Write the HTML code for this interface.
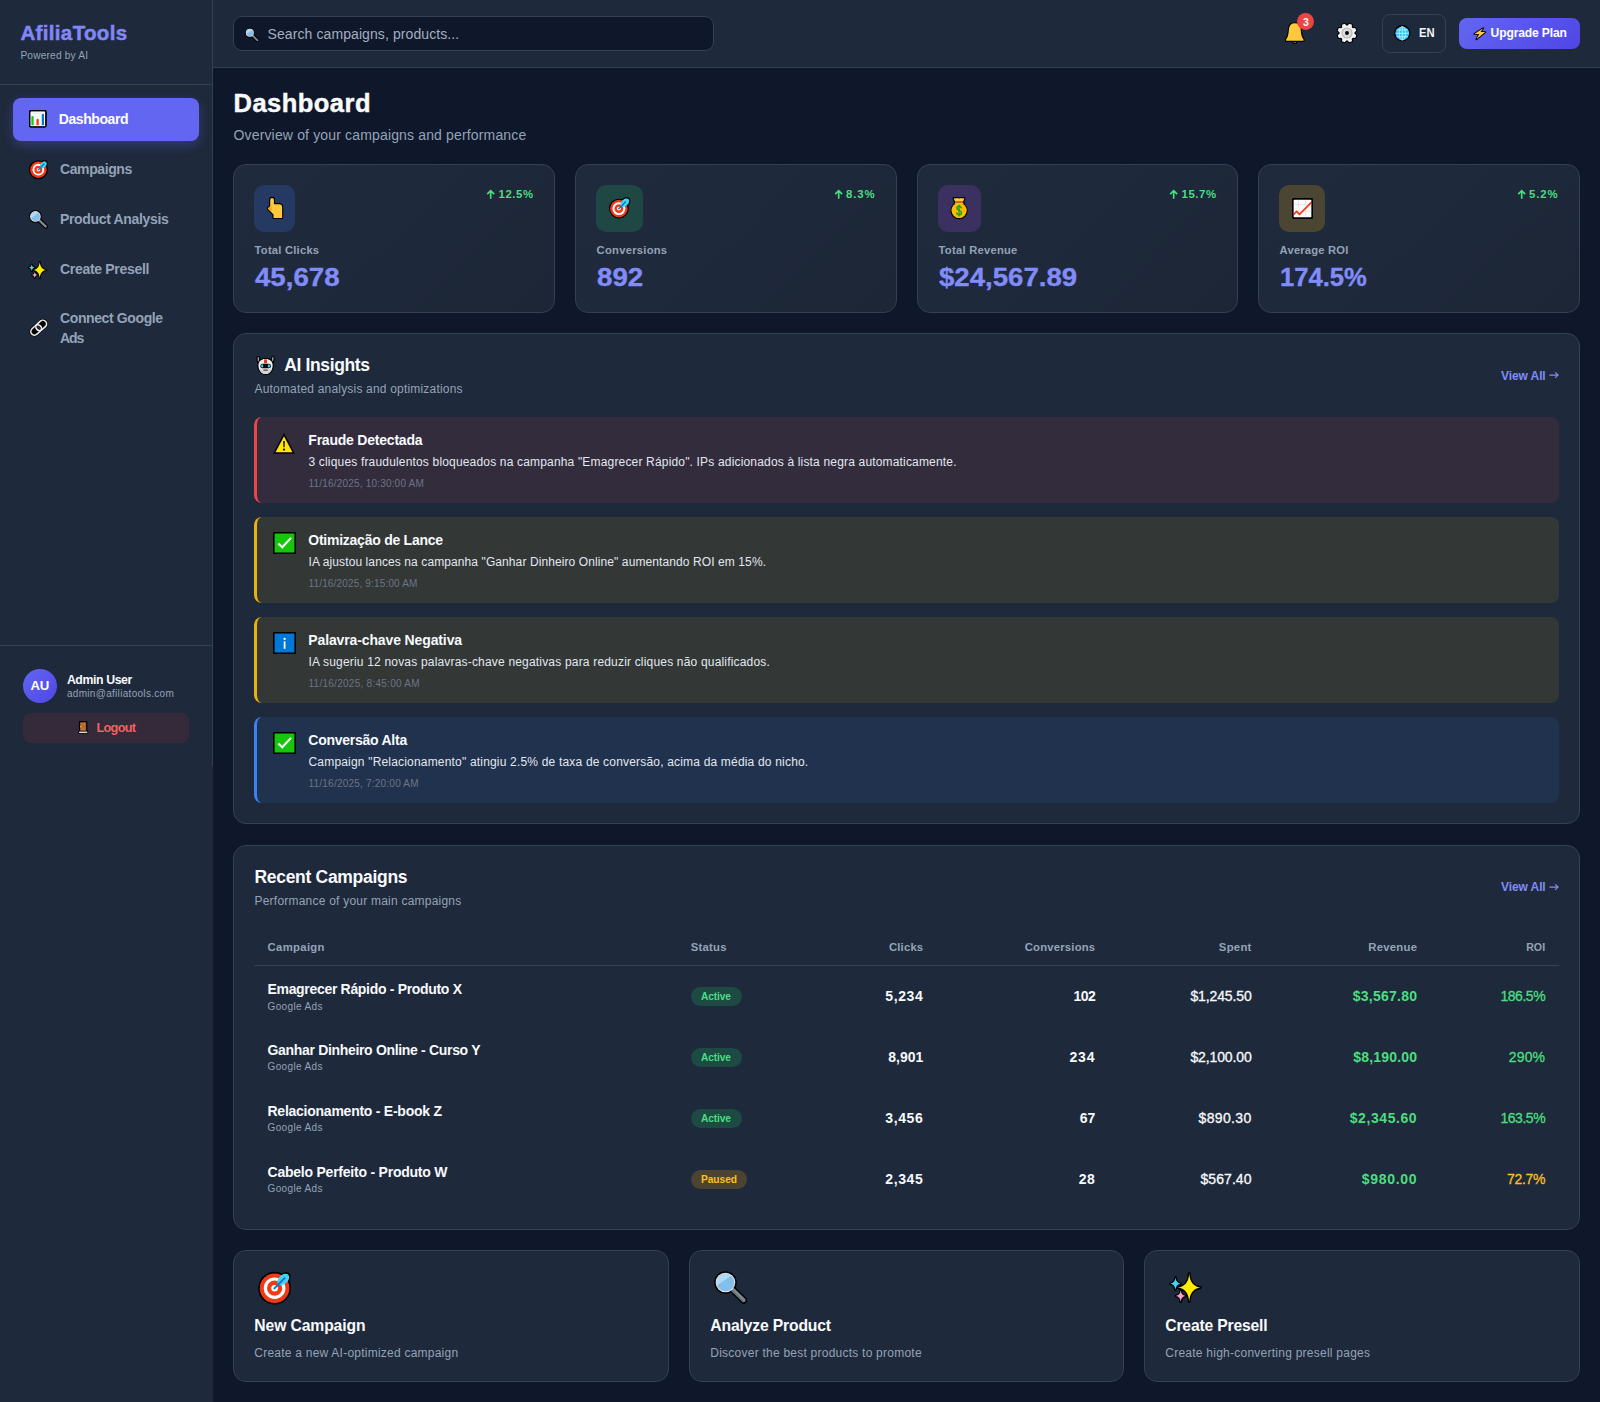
<!DOCTYPE html>
<html lang="en">
<head>
<meta charset="utf-8">
<title>AfiliaTools Dashboard</title>
<style>
*{box-sizing:border-box;margin:0;padding:0}
html,body{width:1600px;height:1402px;overflow:hidden}
body{font-family:"Liberation Sans",sans-serif;background:#0f172a;color:#f8fafc;position:relative}
.t{position:absolute;white-space:nowrap}
.hl{position:absolute;height:1px;background:#334155}
#sidebar{position:absolute;left:0;top:0;width:213px;height:1402px;background:#1e293b}
#sideline{position:absolute;left:212px;top:0;width:1px;height:766px;background:#334155}
.logo{font-size:20.5px;font-weight:700;color:#8186f8;line-height:24px;-webkit-text-stroke:0.5px #8186f8}
.powered{font-size:10.2px;color:#94a3b8;line-height:14px}
.nav{position:absolute;left:13px;width:186px;border-radius:8px}
.nav.active{background:#6366f1;box-shadow:0 4px 12px rgba(99,102,241,.32)}
.navt{font-size:14px;font-weight:700;color:#94a3b8;line-height:20px}
#avatar{position:absolute;left:23px;top:669px;width:34px;height:34px;border-radius:50%;background:linear-gradient(135deg,#6366f1,#4f46e5)}
#logout{position:absolute;left:23.3px;top:712.8px;width:165.8px;height:30px;border-radius:7.5px;background:#342a3a}
#header{position:absolute;left:213px;top:0;width:1387px;height:68px;background:#1e293b;border-bottom:1px solid #334155}
#search{position:absolute;left:233px;top:16px;width:481px;height:35px;border-radius:9px;background:#0f172a;border:1px solid #334155}
#lang{position:absolute;left:1381.5px;top:14px;width:64.5px;height:39px;border-radius:8px;border:1px solid #334155;background:#1e293b}
#upgrade{position:absolute;left:1459px;top:18.3px;width:121px;height:30.4px;border-radius:8px;background:linear-gradient(135deg,#6366f1,#4f46e5)}
#badge{position:absolute;left:1297px;top:13px;width:17px;height:17px;border-radius:50%;background:#ef4444}
.h1{font-size:25.5px;font-weight:700;line-height:34px;color:#f8fafc;-webkit-text-stroke:0.45px #f8fafc}
.sub{font-size:14px;line-height:18px;color:#94a3b8}
.card{position:absolute;background:#1e293b;border:1px solid #334155;border-radius:13px}
.ib{position:absolute;border-radius:10px}
.slb{font-size:11.2px;font-weight:700;color:#94a3b8;line-height:16px}
.svl{font-size:24.9px;font-weight:700;color:#818cf8;line-height:32px;-webkit-text-stroke:0.35px #818cf8}
.sch{font-size:11.4px;font-weight:700;color:#4ade80;line-height:16px}
.ctitle{font-size:17.5px;font-weight:700;color:#f8fafc;line-height:24px}
.csub{font-size:12px;color:#94a3b8;line-height:16px}
.viewall{font-size:12px;font-weight:700;color:#818cf8;line-height:16px}
.ins{position:absolute;left:254px;width:1305px;height:86.7px;border-radius:8px;border-left:3px solid}
.it{font-size:14px;font-weight:700;color:#f8fafc;line-height:20px}
.id{font-size:12px;color:#e2e8f0;line-height:18px}
.im{font-size:10px;color:#6a7585;line-height:14px}
.th{font-size:11.3px;font-weight:700;color:#94a3b8;line-height:16px}
.cn{font-size:14px;font-weight:700;color:#f8fafc;line-height:18px}
.cs{font-size:10px;color:#94a3b8;line-height:14px}
.pill{position:absolute;height:19px;border-radius:10px}
.pt{font-size:10.2px;font-weight:700;line-height:14px}
.num{font-size:14px;color:#f8fafc;line-height:20px}
.num.b{font-weight:700}
.num.m{-webkit-text-stroke:0.3px currentColor}
.qt{font-size:15.7px;font-weight:700;color:#f8fafc;line-height:20px}
.qd{font-size:12px;color:#94a3b8;line-height:16px}
.sg{background:linear-gradient(135deg,#1f2a3c 0%,#1e293b 40%,#1c2637 100%)}

</style>
</head>
<body>
<div id="sidebar"></div><div id="sideline"></div>
<div class="t logo" style="left:20.4px;top:20.5px;letter-spacing:0.353px;">AfiliaTools</div>
<div class="t powered" style="left:20.4px;top:48.5px;letter-spacing:0.166px;">Powered by AI</div>
<div class="hl" style="left:0;top:84px;width:212px"></div>
<div class="nav active" style="top:97.6px;height:43.4px"></div>
<svg viewBox="0 0 18 18" width="17.6" height="17.60" style="position:absolute;overflow:visible;left:28.7px;top:110.4px"><rect x="0.65" y="0.65" width="16.7" height="16.7" rx="1.4" fill="#fcfcfc" stroke="#000" stroke-width="1.3"/>
<path d="M6.2,1.5V16M11.4,1.5V16M1.5,3.2H16.5" stroke="#e4e4e4" stroke-width="0.5"/>
<path d="M3.6,16.4V7.2" stroke="#16c60c" stroke-width="2.3" stroke-linecap="round"/>
<path d="M8.8,16.4V10.2" stroke="#f03a17" stroke-width="2.3" stroke-linecap="round"/>
<path d="M14.2,16.4V5" stroke="#0078d4" stroke-width="2.3" stroke-linecap="round"/>
<rect x="1.3" y="15.6" width="15.4" height="1.2" fill="#fcfcfc"/>
<rect x="0.65" y="0.65" width="16.7" height="16.7" rx="1.4" fill="none" stroke="#000" stroke-width="1.3"/></svg>
<div class="t navt" style="left:58.75px;top:109.4px;color:#fff;letter-spacing:-0.422px;">Dashboard</div>
<svg viewBox="0 0 34 34" width="19.2" height="19.20" style="position:absolute;overflow:visible;left:28.6px;top:159.6px"><circle cx="16.6" cy="17.2" r="16.9" fill="#000"/>
<ellipse cx="25.4" cy="8.4" rx="9.3" ry="6.5" transform="rotate(-43 25.4 8.4)" fill="#000"/>
<circle cx="16.6" cy="17.2" r="14.6" fill="#f03a17"/>
<circle cx="16.6" cy="17.2" r="10.4" fill="#fff"/>
<circle cx="16.6" cy="17.2" r="7.0" fill="#f03a17"/>
<circle cx="16.6" cy="17.2" r="3.0" fill="#fff"/>
<ellipse cx="25.3" cy="8.5" rx="6.9" ry="4.6" transform="rotate(-43 25.3 8.5)" fill="#3dd6f5"/>
<line x1="16.4" y1="17.4" x2="26.6" y2="7.2" stroke="#0078d4" stroke-width="2.4" stroke-linecap="round"/></svg>
<div class="t navt" style="left:60px;top:159.4px;letter-spacing:-0.402px;">Campaigns</div>
<svg viewBox="0 0 34 34" width="18.8" height="18.80" style="position:absolute;overflow:visible;left:28.8px;top:209.9px"><line x1="19" y1="19" x2="30" y2="29.6" stroke="#000" stroke-width="8.4" stroke-linecap="round"/>
<circle cx="11.6" cy="11.6" r="11.6" fill="#000"/>
<line x1="19" y1="19" x2="30" y2="29.6" stroke="#7d8b92" stroke-width="4.4" stroke-linecap="round"/>
<line x1="18.2" y1="19.8" x2="29.2" y2="30.4" stroke="#5f6d74" stroke-width="1.3" stroke-linecap="round"/>
<circle cx="11.6" cy="11.6" r="9.6" fill="#e8e8e8"/>
<circle cx="11.6" cy="11.6" r="8.3" fill="#83beec"/>
<path d="M3.80,14.34 A8.3,8.3 0 0 1 17.08,5.37 Z" fill="#b3d9f5"/></svg>
<div class="t navt" style="left:60px;top:209.4px;letter-spacing:-0.341px;">Product Analysis</div>
<svg viewBox="0 0 34 32" width="19.4" height="18.26" style="position:absolute;overflow:visible;left:28.4px;top:261.1px"><g stroke="#000" stroke-width="3.3" stroke-linejoin="round" fill="#000">
<path d="M20.60,1.50 C21.28,10.14 25.16,15.04 32.00,15.90 C25.16,16.76 21.28,21.66 20.60,30.30 C19.92,21.66 16.04,16.76 9.20,15.90 C16.04,15.04 19.92,10.14 20.60,1.50 Z"/>
<path d="M6.60,5.90 C7.02,9.50 8.68,11.42 11.80,11.90 C8.68,12.38 7.02,14.30 6.60,17.90 C6.18,14.30 4.52,12.38 1.40,11.90 C4.52,11.42 6.18,9.50 6.60,5.90 Z"/>
<path d="M11.90,18.80 C12.30,22.16 13.90,23.95 16.90,24.40 C13.90,24.85 12.30,26.64 11.90,30.00 C11.50,26.64 9.90,24.85 6.90,24.40 C9.90,23.95 11.50,22.16 11.90,18.80 Z"/>
</g>
<path d="M6.60,5.90 C7.02,9.50 8.68,11.42 11.80,11.90 C8.68,12.38 7.02,14.30 6.60,17.90 C6.18,14.30 4.52,12.38 1.40,11.90 C4.52,11.42 6.18,9.50 6.60,5.90 Z" fill="#3dd6f5"/>
<path d="M11.90,18.80 C12.30,22.16 13.90,23.95 16.90,24.40 C13.90,24.85 12.30,26.64 11.90,30.00 C11.50,26.64 9.90,24.85 6.90,24.40 C9.90,23.95 11.50,22.16 11.90,18.80 Z" fill="#f4a0c4"/>
<path d="M20.60,1.50 C21.28,10.14 25.16,15.04 32.00,15.90 C25.16,16.76 21.28,21.66 20.60,30.30 C19.92,21.66 16.04,16.76 9.20,15.90 C16.04,15.04 19.92,10.14 20.60,1.50 Z" fill="#ffed00"/></svg>
<div class="t navt" style="left:60px;top:259.4px;letter-spacing:-0.308px;">Create Presell</div>
<svg viewBox="0 0 20 20" width="19.4" height="19.40" style="position:absolute;overflow:visible;left:28.5px;top:317.8px"><g transform="rotate(-42 10 10)">
<rect x="0.4" y="6.2" width="12.2" height="7.6" rx="3.8" fill="#000" stroke="#000" stroke-width="2.9"/>
<rect x="7.4" y="6.2" width="12.2" height="7.6" rx="3.8" fill="#000" stroke="#000" stroke-width="2.9"/>
<path d="M10,7.2 A3,3 0 0 1 10,12.8 A3,3 0 0 1 10,7.2Z" fill="#1e293b"/>
<rect x="0.4" y="6.2" width="12.2" height="7.6" rx="3.8" fill="none" stroke="#ececec" stroke-width="1.65"/>
<rect x="7.4" y="6.2" width="12.2" height="7.6" rx="3.8" fill="none" stroke="#ececec" stroke-width="1.65"/>
</g></svg>
<div class="t navt" style="left:60px;top:307.6px;letter-spacing:-0.387px;">Connect Google</div>
<div class="t navt" style="left:60px;top:327.6px;letter-spacing:-1.027px;">Ads</div>
<div class="hl" style="left:0;top:645px;width:212px"></div>
<div id="avatar"></div>
<div class="t" style="left:30.6px;top:677px;font-size:13.2px;font-weight:700;color:#fff;line-height:17px;letter-spacing:-0.262px;">AU</div>
<div class="t" style="left:66.9px;top:672px;font-size:12.3px;font-weight:700;color:#f8fafc;line-height:16px;letter-spacing:-0.402px;">Admin User</div>
<div class="t" style="left:66.9px;top:687.4px;font-size:10px;color:#94a3b8;line-height:14px;letter-spacing:0.308px;">admin@afiliatools.com</div>
<div id="logout"></div>
<svg viewBox="0 0 12 15" width="10.4" height="13.00" style="position:absolute;overflow:visible;left:77.9px;top:721px"><rect x="1.7" y="0.7" width="8.4" height="12.6" rx="0.6" fill="#a5602b" stroke="#000" stroke-width="1.4"/>
<rect x="3.4" y="2.2" width="5.2" height="3.6" fill="#b87333"/>
<rect x="3.4" y="7" width="5.2" height="4.2" fill="#b87333"/>
<circle cx="3.2" cy="6.5" r="0.85" fill="#ffd400"/>
<rect x="0.7" y="11.9" width="10.6" height="2.2" rx="0.5" fill="#e9e9e9" stroke="#000" stroke-width="1.2"/>
<rect x="1.3" y="12.4" width="9.4" height="1.1" fill="#f2f2f2"/></svg>
<div class="t" style="left:96.5px;top:720.2px;font-size:12.7px;font-weight:700;color:#f26161;line-height:17px;letter-spacing:-0.697px;">Logout</div>
<div id="header"></div>
<div id="search"></div>
<svg viewBox="0 0 34 34" width="14.2" height="14.20" style="position:absolute;overflow:visible;left:245px;top:27.6px"><line x1="19" y1="19" x2="30" y2="29.6" stroke="#000" stroke-width="8.4" stroke-linecap="round"/>
<circle cx="11.6" cy="11.6" r="11.6" fill="#000"/>
<line x1="19" y1="19" x2="30" y2="29.6" stroke="#7d8b92" stroke-width="4.4" stroke-linecap="round"/>
<line x1="18.2" y1="19.8" x2="29.2" y2="30.4" stroke="#5f6d74" stroke-width="1.3" stroke-linecap="round"/>
<circle cx="11.6" cy="11.6" r="9.6" fill="#e8e8e8"/>
<circle cx="11.6" cy="11.6" r="8.3" fill="#83beec"/>
<path d="M3.80,14.34 A8.3,8.3 0 0 1 17.08,5.37 Z" fill="#b3d9f5"/></svg>
<div class="t" style="left:267.5px;top:24.3px;font-size:14px;color:#a3aebf;line-height:20px;letter-spacing:0.094px;">Search campaigns, products...</div>
<svg viewBox="0 0 20 22.4" width="19.6" height="21.95" style="position:absolute;overflow:visible;left:1285.2px;top:22.1px"><g stroke="#000" stroke-width="2.2" stroke-linejoin="round" style="paint-order:stroke">
<circle cx="10" cy="19.6" r="1.7" fill="#b5722a"/>
<path d="M10,1.3C6.4,1.3 4.4,3.4 4.1,6.8C3.9,9.6 3.5,12.6 2.7,15C2.3,16.2 1.6,17 1.1,17.8V19.2H18.9V17.8C18.4,17 17.7,16.2 17.3,15C16.5,12.6 16.1,9.6 15.9,6.8C15.6,3.4 13.6,1.3 10,1.3Z" fill="#ffc83d"/>
</g></svg>
<div id="badge"></div>
<div class="t" style="left:1302.9px;top:14.6px;font-size:10.5px;font-weight:700;color:#fff;line-height:14px;">3</div>
<svg viewBox="0 0 22 22" width="22" height="22.00" style="position:absolute;overflow:visible;left:1336.3px;top:22.4px"><path d="M20.43,9.51L20.43,12.49L18.19,13.15L17.60,14.56L18.73,16.61L16.61,18.73L14.56,17.60L13.15,18.19L12.49,20.43L9.51,20.43L8.85,18.19L7.44,17.60L5.39,18.73L3.27,16.61L4.40,14.56L3.81,13.15L1.57,12.49L1.57,9.51L3.81,8.85L4.40,7.44L3.27,5.39L5.39,3.27L7.44,4.40L8.85,3.81L9.51,1.57L12.49,1.57L13.15,3.81L14.56,4.40L16.61,3.27L18.73,5.39L17.60,7.44L18.19,8.85Z" fill="#f2f2f2" stroke="#000" stroke-width="2.1" stroke-linejoin="round" style="paint-order:stroke" transform="rotate(22.5 11 11)"/>
<circle cx="11" cy="11" r="5.0" fill="#dcdcdc" stroke="#b4b4b4" stroke-width="1.1"/>
<circle cx="11" cy="11" r="1.95" fill="#000"/></svg>
<div id="lang"></div>
<svg viewBox="0 0 17 17" width="16.6" height="16.60" style="position:absolute;overflow:visible;left:1393.8px;top:24.8px"><circle cx="8.5" cy="8.5" r="7.7" fill="#29c5f0" stroke="#000" stroke-width="1.4"/>
<g fill="none" stroke="#d8f6ff" stroke-width="0.75">
<ellipse cx="8.5" cy="8.5" rx="3.2" ry="7"/>
<path d="M8.5,1.5V15.5M1.6,8.5H15.4M2.6,5H14.4M2.6,12H14.4"/>
</g></svg>
<div class="t" style="left:1418.9px;top:25.2px;font-size:12.1px;font-weight:700;color:#f1f5f9;line-height:17px;transform:scaleX(0.9279);transform-origin:left center;">EN</div>
<div id="upgrade"></div>
<svg viewBox="0 0 14 14" width="13.4" height="13.40" style="position:absolute;overflow:visible;left:1473px;top:27px"><path d="M10.6,1.2L1.4,7.2H6.5L3.6,12.9L12.8,5.3H7.9Z" fill="#ffc83d" stroke="#000" stroke-width="1.9" stroke-linejoin="round" style="paint-order:stroke"/></svg>
<div class="t" style="left:1490.6px;top:25.2px;font-size:12.1px;font-weight:700;color:#fff;line-height:17px;letter-spacing:-0.143px;">Upgrade Plan</div>
<div class="t h1" style="left:233.5px;top:85.6px;letter-spacing:0.475px;">Dashboard</div>
<div class="t sub" style="left:233.5px;top:125.6px;letter-spacing:0.156px;">Overview of your campaigns and performance</div>
<div class="card sg" style="left:233px;top:164px;width:322px;height:149px"></div>
<div class="ib" style="left:254px;top:185px;width:41px;height:47px;background:#253a62"></div>
<svg viewBox="0 0 17 23" width="16.6" height="22.46" style="position:absolute;overflow:visible;left:266.9px;top:196.9px"><path d="M3.3,9.4V2.9A1.9,1.9 0 0 1 7.1,2.9V7.3H12.4A3.1,3.1 0 0 1 15.5,10.4V21.4H6.7V17.9L1.3,12.6A1.25,1.25 0 0 1 1.3,10.9Z" fill="#ffc83d" stroke="#000" stroke-width="2.3" stroke-linejoin="round" style="paint-order:stroke"/>
<path d="M3.3,9.9L1.6,11.3A0.8,0.8 0 0 0 1.7,12.2L4.6,15V10Z" fill="#f0a30a"/>
<path d="M9.6,8.2V9.4M12.2,8.4V9.6" stroke="#e3a100" stroke-width="0.7"/></svg>
<div class="t slb" style="left:254.6px;top:242.4px;letter-spacing:0.230px;">Total Clicks</div>
<div class="t svl" style="left:254.8px;top:261px;transform:scaleX(1.1098);transform-origin:left center;">45,678</div>
<div class="t sch" style="right:1066.4px;top:186.3px;letter-spacing:0.547px;">12.5%</div>
<svg viewBox="0 0 10 11" width="9.4" height="10.34" style="position:absolute;left:485.8px;top:188.6px"><path d="M5,10.4V1.7M1.3,5.4L5,1.7L8.7,5.4" fill="none" stroke="#4ade80" stroke-width="1.75"/></svg>
<div class="card sg" style="left:575px;top:164px;width:322px;height:149px"></div>
<div class="ib" style="left:596px;top:185px;width:47px;height:47px;background:#1f4743"></div>
<svg viewBox="0 0 22 22" width="22" height="22.00" style="position:absolute;overflow:visible;left:609.4px;top:196.5px"><circle cx="9.9" cy="11.6" r="9.9" fill="#000"/>
<ellipse cx="15.9" cy="5.6" rx="6.3" ry="4.5" transform="rotate(-43 15.9 5.6)" fill="#000"/>
<circle cx="9.9" cy="11.6" r="8.8" fill="#f03a17"/>
<circle cx="9.9" cy="11.6" r="6.4" fill="#fff"/>
<circle cx="9.9" cy="11.6" r="4.4" fill="#f03a17"/>
<circle cx="9.9" cy="11.6" r="1.9" fill="#fff"/>
<ellipse cx="15.8" cy="5.7" rx="5.2" ry="3.3" transform="rotate(-43 15.8 5.7)" fill="#3dd6f5"/>
<line x1="9.8" y1="11.7" x2="16.4" y2="5.1" stroke="#0078d4" stroke-width="1.4" stroke-linecap="round"/></svg>
<div class="t slb" style="left:596.6px;top:242.4px;letter-spacing:0.273px;">Conversions</div>
<div class="t svl" style="left:596.8px;top:261px;transform:scaleX(1.1136);transform-origin:left center;">892</div>
<div class="t sch" style="right:724.4px;top:186.3px;letter-spacing:0.927px;">8.3%</div>
<svg viewBox="0 0 10 11" width="9.4" height="10.34" style="position:absolute;left:833.6px;top:188.6px"><path d="M5,10.4V1.7M1.3,5.4L5,1.7L8.7,5.4" fill="none" stroke="#4ade80" stroke-width="1.75"/></svg>
<div class="card sg" style="left:917px;top:164px;width:321px;height:149px"></div>
<div class="ib" style="left:938px;top:185px;width:43px;height:47px;background:#3b3160"></div>
<svg viewBox="0 0 18 22" width="18.4" height="22.49" style="position:absolute;overflow:visible;left:950.3px;top:197.1px"><g stroke="#000" stroke-width="2.4" stroke-linejoin="round" style="paint-order:stroke">
<path d="M3.8,1.2L5.3,1.8L6.9,1.1L8.9,1.8L10.9,1.1L12.5,1.8L14,1.2L12.8,4.6H5Z" fill="#ffc83d"/>
<circle cx="8.9" cy="13.3" r="7.3" fill="#ffb900"/>
<path d="M5,4.4H12.8L13.2,6.4H4.6Z" fill="#b5722a"/>
</g>
<path d="M3.8,1.2L5.3,1.8L6.9,1.1L8.9,1.8L10.9,1.1L12.5,1.8L14,1.2L12.8,4.4H5Z" fill="#ffc83d"/>
<rect x="5" y="4.3" width="7.8" height="1.5" fill="#b5722a"/>
<circle cx="8.9" cy="13.3" r="7.3" fill="#ffb900"/>
<path d="M5.2,5.8H12.6L13.6,7.6H4.2Z" fill="#ffb900"/>
<path d="M11,10.5C10.6,9.4 9.6,9.1 8.8,9.1C7.6,9.1 6.8,9.9 6.8,10.9C6.8,13.4 11.2,12.7 11.2,15.3C11.2,16.5 10.2,17.3 9,17.3C7.9,17.3 6.9,16.8 6.6,15.7" fill="none" stroke="#16a521" stroke-width="1.5" stroke-linecap="round"/>
<path d="M8.9,8V18.5" stroke="#16a521" stroke-width="1.3" stroke-linecap="round"/></svg>
<div class="t slb" style="left:938.6px;top:242.4px;letter-spacing:0.259px;">Total Revenue</div>
<div class="t svl" style="left:938.8px;top:261px;transform:scaleX(1.1085);transform-origin:left center;">$24,567.89</div>
<div class="t sch" style="right:383.4000000000001px;top:186.3px;letter-spacing:0.547px;">15.7%</div>
<svg viewBox="0 0 10 11" width="9.4" height="10.34" style="position:absolute;left:1168.8px;top:188.6px"><path d="M5,10.4V1.7M1.3,5.4L5,1.7L8.7,5.4" fill="none" stroke="#4ade80" stroke-width="1.75"/></svg>
<div class="card sg" style="left:1258px;top:164px;width:322px;height:149px"></div>
<div class="ib" style="left:1279px;top:185px;width:46px;height:47px;background:#4a4631"></div>
<svg viewBox="0 0 21 21" width="21" height="21.00" style="position:absolute;overflow:visible;left:1291.5px;top:198.0px"><rect x="0.7" y="0.7" width="19.6" height="19.6" rx="1.5" fill="#fbfbfb" stroke="#000" stroke-width="1.4"/>
<path d="M6.3,1.5V19.5M13.6,1.5V19.5M1.5,6.4H19.5M1.5,13.4H19.5" stroke="#dcdcdc" stroke-width="0.7"/>
<path d="M1.2,17L4.6,13.4L7.5,16.3L19.9,3.9" fill="none" stroke="#f03a17" stroke-width="1.7" stroke-linejoin="miter"/>
<rect x="0.7" y="0.7" width="19.6" height="19.6" rx="1.5" fill="none" stroke="#000" stroke-width="1.4"/></svg>
<div class="t slb" style="left:1279.6px;top:242.4px;letter-spacing:0.200px;">Average ROI</div>
<div class="t svl" style="left:1279.8px;top:261px;transform:scaleX(1.0294);transform-origin:left center;">174.5%</div>
<div class="t sch" style="right:41.40000000000009px;top:186.3px;letter-spacing:0.927px;">5.2%</div>
<svg viewBox="0 0 10 11" width="9.4" height="10.34" style="position:absolute;left:1516.5px;top:188.6px"><path d="M5,10.4V1.7M1.3,5.4L5,1.7L8.7,5.4" fill="none" stroke="#4ade80" stroke-width="1.75"/></svg>
<div class="card" style="left:233px;top:333px;width:1347px;height:491.4px"></div>
<svg viewBox="0 0 19 19" width="19.3" height="19.30" style="position:absolute;overflow:visible;left:256px;top:355.5px"><g stroke="#000" stroke-width="2.3" stroke-linejoin="round" style="paint-order:stroke">
<path d="M1.4,1.3H2.8L3.4,6.8H2.2Z" fill="#a6a6a6"/>
<path d="M17.4,1.3H16L15.4,6.8H16.6Z" fill="#a6a6a6"/>
<path d="M9.4,2.9C13.6,2.9 16.4,5.2 16.4,9.3C16.4,14 13.2,17.8 9.4,17.8C5.6,17.8 2.4,14 2.4,9.3C2.4,5.2 5.2,2.9 9.4,2.9Z" fill="#efefef"/>
</g>
<path d="M2.9,12.2C4.2,15.8 6.8,17.6 9.4,17.6C12,17.6 14.6,15.8 15.9,12.2C13,13 5.8,13 2.9,12.2Z" fill="#d6d6d6"/>
<rect x="7.0" y="3.2" width="4.8" height="3.8" fill="#fff"/>
<rect x="7.9" y="3.1" width="3" height="4" rx="0.5" fill="#f03a17"/>
<rect x="4.3" y="7.6" width="10.3" height="4.4" rx="1.9" fill="#000"/>
<ellipse cx="6.1" cy="9.8" rx="1.1" ry="1.6" fill="#3dd6f5"/>
<ellipse cx="12.7" cy="9.8" rx="1.1" ry="1.6" fill="#3dd6f5"/>
<rect x="7.2" y="13.3" width="4.4" height="1.3" rx="0.5" fill="#4a4a4a"/></svg>
<div class="t ctitle" style="left:284.3px;top:353px;letter-spacing:-0.370px;">AI Insights</div>
<div class="t csub" style="left:254.5px;top:381px;letter-spacing:0.187px;">Automated analysis and optimizations</div>
<div class="t viewall" style="right:54.40000000000009px;top:367.6px;letter-spacing:-0.108px;">View All</div>
<svg viewBox="0 0 10 8" width="9.8" height="7.84" style="position:absolute;left:1548.9px;top:371.3px"><path d="M0.4,4.2H9.2M6.3,1.4L9.2,4.2L6.3,7" fill="none" stroke="#818cf8" stroke-width="1.3"/></svg>
<div class="ins" style="top:416.8px;background:#332c3c;border-left-color:#ef4444"></div>
<svg viewBox="0 0 22 22" width="22" height="22.00" style="position:absolute;overflow:visible;left:273.4px;top:433.2px"><path d="M11,1.7L20.7,20H1.3Z" fill="#ffe500" stroke="#000" stroke-width="1.5" stroke-linejoin="miter"/>
<path d="M10.2,8h1.6l-0.25,6.2h-1.1Z" fill="#000"/>
<circle cx="11" cy="16.6" r="1.05" fill="#000"/></svg>
<div class="t it" style="left:308.3px;top:430.2px;letter-spacing:-0.216px;">Fraude Detectada</div>
<div class="t id" style="left:308.5px;top:453.1px;letter-spacing:0.172px;">3 cliques fraudulentos bloqueados na campanha "Emagrecer Rápido". IPs adicionados à lista negra automaticamente.</div>
<div class="t im" style="left:308.5px;top:476.8px;letter-spacing:0.192px;">11/16/2025, 10:30:00 AM</div>
<div class="ins" style="top:516.8px;background:#333736;border-left-color:#eab308"></div>
<svg viewBox="0 0 23 22" width="23" height="22.00" style="position:absolute;overflow:visible;left:273px;top:532.1px"><rect x="0.8" y="0.8" width="21.4" height="20.4" rx="0.4" fill="#16c60c" stroke="#000" stroke-width="1.6"/>
<path d="M5.4,11.4L9.3,15.2L18,5.9" fill="none" stroke="#fff" stroke-width="2.1" stroke-linecap="butt" stroke-linejoin="miter"/></svg>
<div class="t it" style="left:308.3px;top:530.1999999999999px;letter-spacing:-0.249px;">Otimização de Lance</div>
<div class="t id" style="left:308.5px;top:553.0999999999999px;letter-spacing:0.097px;">IA ajustou lances na campanha "Ganhar Dinheiro Online" aumentando ROI em 15%.</div>
<div class="t im" style="left:308.5px;top:576.8px;letter-spacing:0.163px;">11/16/2025, 9:15:00 AM</div>
<div class="ins" style="top:616.8px;background:#333736;border-left-color:#eab308"></div>
<svg viewBox="0 0 23 22" width="23" height="22.00" style="position:absolute;overflow:visible;left:273px;top:632.1px"><rect x="0.8" y="0.8" width="21.4" height="20.4" rx="0.4" fill="#0078d7" stroke="#000" stroke-width="1.6"/>
<circle cx="11.6" cy="6.9" r="1.15" fill="#fff"/>
<rect x="10.75" y="9.4" width="1.7" height="7.4" fill="#fff"/></svg>
<div class="t it" style="left:308.3px;top:630.1999999999999px;letter-spacing:-0.126px;">Palavra-chave Negativa</div>
<div class="t id" style="left:308.5px;top:653.0999999999999px;letter-spacing:0.184px;">IA sugeriu 12 novas palavras-chave negativas para reduzir cliques não qualificados.</div>
<div class="t im" style="left:308.5px;top:676.8px;letter-spacing:0.268px;">11/16/2025, 8:45:00 AM</div>
<div class="ins" style="top:716.8px;background:#21324e;border-left-color:#3b82f6"></div>
<svg viewBox="0 0 23 22" width="23" height="22.00" style="position:absolute;overflow:visible;left:273px;top:732.1px"><rect x="0.8" y="0.8" width="21.4" height="20.4" rx="0.4" fill="#16c60c" stroke="#000" stroke-width="1.6"/>
<path d="M5.4,11.4L9.3,15.2L18,5.9" fill="none" stroke="#fff" stroke-width="2.1" stroke-linecap="butt" stroke-linejoin="miter"/></svg>
<div class="t it" style="left:308.3px;top:730.1999999999999px;letter-spacing:-0.253px;">Conversão Alta</div>
<div class="t id" style="left:308.5px;top:753.0999999999999px;letter-spacing:0.185px;">Campaign "Relacionamento" atingiu 2.5% de taxa de conversão, acima da média do nicho.</div>
<div class="t im" style="left:308.5px;top:776.8px;letter-spacing:0.221px;">11/16/2025, 7:20:00 AM</div>
<div class="card" style="left:233px;top:844.6px;width:1347px;height:385.4px"></div>
<div class="t ctitle" style="left:254.5px;top:864.8px;letter-spacing:-0.303px;">Recent Campaigns</div>
<div class="t csub" style="left:254.5px;top:892.6px;letter-spacing:0.222px;">Performance of your main campaigns</div>
<div class="t viewall" style="right:54.40000000000009px;top:879.2px;letter-spacing:-0.108px;">View All</div>
<svg viewBox="0 0 10 8" width="9.8" height="7.84" style="position:absolute;left:1548.9px;top:882.9px"><path d="M0.4,4.2H9.2M6.3,1.4L9.2,4.2L6.3,7" fill="none" stroke="#818cf8" stroke-width="1.3"/></svg>
<div class="t th" style="left:267.5px;top:938.9px;letter-spacing:0.342px;">Campaign</div>
<div class="t th" style="left:690.75px;top:938.9px;letter-spacing:0.244px;">Status</div>
<div class="t th" style="right:676.7px;top:938.9px;letter-spacing:0.181px;">Clicks</div>
<div class="t th" style="right:504.70000000000005px;top:938.9px;letter-spacing:0.196px;">Conversions</div>
<div class="t th" style="right:348.4000000000001px;top:938.9px;letter-spacing:0.277px;">Spent</div>
<div class="t th" style="right:182.79999999999995px;top:938.9px;letter-spacing:0.268px;">Revenue</div>
<div class="t th" style="right:54.799999999999955px;top:938.9px;transform:scaleX(0.9406);transform-origin:right center;">ROI</div>
<div class="hl" style="left:254px;top:965px;width:1305px"></div>
<div class="t cn" style="left:267.5px;top:980.3px;letter-spacing:-0.317px;">Emagrecer Rápido - Produto X</div>
<div class="t cs" style="left:267.5px;top:999.5px;letter-spacing:0.365px;">Google Ads</div>
<div class="pill" style="left:690.75px;top:987.40px;width:51px;background:#1d4a43"></div>
<div class="t pt" style="left:701px;top:990.4px;color:#4ade80;letter-spacing:-0.116px;">Active</div>
<div class="t num b" style="right:676.7px;top:986.1999999999999px;letter-spacing:0.588px;">5,234</div>
<div class="t num b" style="right:504.70000000000005px;top:986.1999999999999px;letter-spacing:-0.530px;">102</div>
<div class="t num m" style="right:348.4000000000001px;top:986.1999999999999px;letter-spacing:-0.125px;">$1,245.50</div>
<div class="t num b" style="right:182.79999999999995px;top:986.1999999999999px;color:#4ade80;letter-spacing:0.238px;">$3,567.80</div>
<div class="t num m" style="right:54.799999999999955px;top:986.1999999999999px;color:#4ade80;letter-spacing:-0.457px;">186.5%</div>
<div class="t cn" style="left:267.5px;top:1041.2px;letter-spacing:-0.323px;">Ganhar Dinheiro Online - Curso Y</div>
<div class="t cs" style="left:267.5px;top:1060.3999999999999px;letter-spacing:0.365px;">Google Ads</div>
<div class="pill" style="left:690.75px;top:1048.30px;width:51px;background:#1d4a43"></div>
<div class="t pt" style="left:701px;top:1051.3px;color:#4ade80;letter-spacing:-0.116px;">Active</div>
<div class="t num b" style="right:676.7px;top:1047.1px;letter-spacing:-0.012px;">8,901</div>
<div class="t num b" style="right:504.70000000000005px;top:1047.1px;letter-spacing:0.820px;">234</div>
<div class="t num m" style="right:348.4000000000001px;top:1047.1px;letter-spacing:-0.125px;">$2,100.00</div>
<div class="t num b" style="right:182.79999999999995px;top:1047.1px;color:#4ade80;letter-spacing:0.175px;">$8,190.00</div>
<div class="t num m" style="right:54.799999999999955px;top:1047.1px;color:#4ade80;letter-spacing:0.162px;">290%</div>
<div class="t cn" style="left:267.5px;top:1102.1000000000001px;letter-spacing:-0.249px;">Relacionamento - E-book Z</div>
<div class="t cs" style="left:267.5px;top:1121.3px;letter-spacing:0.365px;">Google Ads</div>
<div class="pill" style="left:690.75px;top:1109.20px;width:51px;background:#1d4a43"></div>
<div class="t pt" style="left:701px;top:1112.2px;color:#4ade80;letter-spacing:-0.116px;">Active</div>
<div class="t num b" style="right:676.7px;top:1108.0px;letter-spacing:0.588px;">3,456</div>
<div class="t num b" style="right:504.70000000000005px;top:1108.0px;letter-spacing:0.022px;">67</div>
<div class="t num m" style="right:348.4000000000001px;top:1108.0px;letter-spacing:0.348px;">$890.30</div>
<div class="t num b" style="right:182.79999999999995px;top:1108.0px;color:#4ade80;letter-spacing:0.575px;">$2,345.60</div>
<div class="t num m" style="right:54.799999999999955px;top:1108.0px;color:#4ade80;letter-spacing:-0.457px;">163.5%</div>
<div class="t cn" style="left:267.5px;top:1163.0px;letter-spacing:-0.227px;">Cabelo Perfeito - Produto W</div>
<div class="t cs" style="left:267.5px;top:1182.1999999999998px;letter-spacing:0.365px;">Google Ads</div>
<div class="pill" style="left:690.75px;top:1170.10px;width:56px;background:#4c4430"></div>
<div class="t pt" style="left:701px;top:1173.1px;color:#fbbf24;letter-spacing:-0.050px;">Paused</div>
<div class="t num b" style="right:676.7px;top:1168.8999999999999px;letter-spacing:0.588px;">2,345</div>
<div class="t num b" style="right:504.70000000000005px;top:1168.8999999999999px;letter-spacing:0.522px;">28</div>
<div class="t num m" style="right:348.4000000000001px;top:1168.8999999999999px;letter-spacing:0.082px;">$567.40</div>
<div class="t num b" style="right:182.79999999999995px;top:1168.8999999999999px;color:#4ade80;letter-spacing:0.698px;">$980.00</div>
<div class="t num m" style="right:54.799999999999955px;top:1168.8999999999999px;color:#fbbf24;letter-spacing:-0.301px;">72.7%</div>
<div class="card" style="left:233px;top:1250px;width:436px;height:132px"></div>
<svg viewBox="0 0 34 34" width="34" height="34.00" style="position:absolute;overflow:visible;left:258px;top:1270.6px"><circle cx="16.6" cy="17.2" r="16.4" fill="#000"/>
<ellipse cx="25.4" cy="8.4" rx="8.6" ry="5.7" transform="rotate(-43 25.4 8.4)" fill="#000"/>
<circle cx="16.6" cy="17.2" r="14.8" fill="#f03a17"/>
<circle cx="16.6" cy="17.2" r="10.8" fill="#fff"/>
<circle cx="16.6" cy="17.2" r="7.6" fill="#f03a17"/>
<circle cx="16.6" cy="17.2" r="3.3" fill="#fff"/>
<ellipse cx="25.3" cy="8.5" rx="6.9" ry="4.6" transform="rotate(-43 25.3 8.5)" fill="#3dd6f5"/>
<line x1="16.4" y1="17.4" x2="26.6" y2="7.2" stroke="#0078d4" stroke-width="1.9" stroke-linecap="round"/></svg>
<div class="t qt" style="left:254.3px;top:1315.6px;letter-spacing:-0.109px;">New Campaign</div>
<div class="t qd" style="left:254.3px;top:1345.4px;letter-spacing:0.232px;">Create a new AI-optimized campaign</div>
<div class="card" style="left:689px;top:1250px;width:435px;height:132px"></div>
<svg viewBox="0 0 34 34" width="33.6" height="33.60" style="position:absolute;overflow:visible;left:713.6px;top:1270.8px"><line x1="19" y1="19" x2="30" y2="29.6" stroke="#000" stroke-width="7.0" stroke-linecap="round"/>
<circle cx="11.6" cy="11.6" r="11.4" fill="#000"/>
<line x1="19" y1="19" x2="30" y2="29.6" stroke="#7d8b92" stroke-width="4.0" stroke-linecap="round"/>
<line x1="18.2" y1="19.8" x2="29.2" y2="30.4" stroke="#5f6d74" stroke-width="1.3" stroke-linecap="round"/>
<circle cx="11.6" cy="11.6" r="9.9" fill="#e8e8e8"/>
<circle cx="11.6" cy="11.6" r="8.9" fill="#83beec"/>
<path d="M3.23,14.54 A8.9,8.9 0 0 1 17.47,4.92 Z" fill="#b3d9f5"/></svg>
<div class="t qt" style="left:710.3px;top:1315.6px;letter-spacing:-0.155px;">Analyze Product</div>
<div class="t qd" style="left:710.3px;top:1345.4px;letter-spacing:0.236px;">Discover the best products to promote</div>
<div class="card" style="left:1144px;top:1250px;width:436px;height:132px"></div>
<svg viewBox="0 0 34 32" width="33.4" height="31.44" style="position:absolute;overflow:visible;left:1168.8px;top:1272.2px"><g stroke="#000" stroke-width="2.7" stroke-linejoin="round" fill="#000">
<path d="M20.60,1.50 C21.12,10.14 25.24,15.25 32.20,15.90 C25.24,16.55 21.12,21.66 20.60,30.30 C20.08,21.66 15.96,16.55 9.00,15.90 C15.96,15.25 20.08,10.14 20.60,1.50 Z"/>
<path d="M6.60,5.70 C6.97,9.42 8.72,11.47 11.90,11.90 C8.72,12.33 6.97,14.38 6.60,18.10 C6.23,14.38 4.48,12.33 1.30,11.90 C4.48,11.47 6.23,9.42 6.60,5.70 Z"/>
<path d="M11.90,18.60 C12.25,22.08 13.90,23.99 16.90,24.40 C13.90,24.81 12.25,26.72 11.90,30.20 C11.55,26.72 9.90,24.81 6.90,24.40 C9.90,23.99 11.55,22.08 11.90,18.60 Z"/>
</g>
<path d="M6.60,5.70 C6.97,9.42 8.72,11.47 11.90,11.90 C8.72,12.33 6.97,14.38 6.60,18.10 C6.23,14.38 4.48,12.33 1.30,11.90 C4.48,11.47 6.23,9.42 6.60,5.70 Z" fill="#3dd6f5"/>
<path d="M11.90,18.60 C12.25,22.08 13.90,23.99 16.90,24.40 C13.90,24.81 12.25,26.72 11.90,30.20 C11.55,26.72 9.90,24.81 6.90,24.40 C9.90,23.99 11.55,22.08 11.90,18.60 Z" fill="#f4a0c4"/>
<path d="M20.60,1.50 C21.12,10.14 25.24,15.25 32.20,15.90 C25.24,16.55 21.12,21.66 20.60,30.30 C20.08,21.66 15.96,16.55 9.00,15.90 C15.96,15.25 20.08,10.14 20.60,1.50 Z" fill="#ffed00"/></svg>
<div class="t qt" style="left:1165.3px;top:1315.6px;letter-spacing:-0.185px;">Create Presell</div>
<div class="t qd" style="left:1165.3px;top:1345.4px;letter-spacing:0.246px;">Create high-converting presell pages</div>
</body>
</html>
